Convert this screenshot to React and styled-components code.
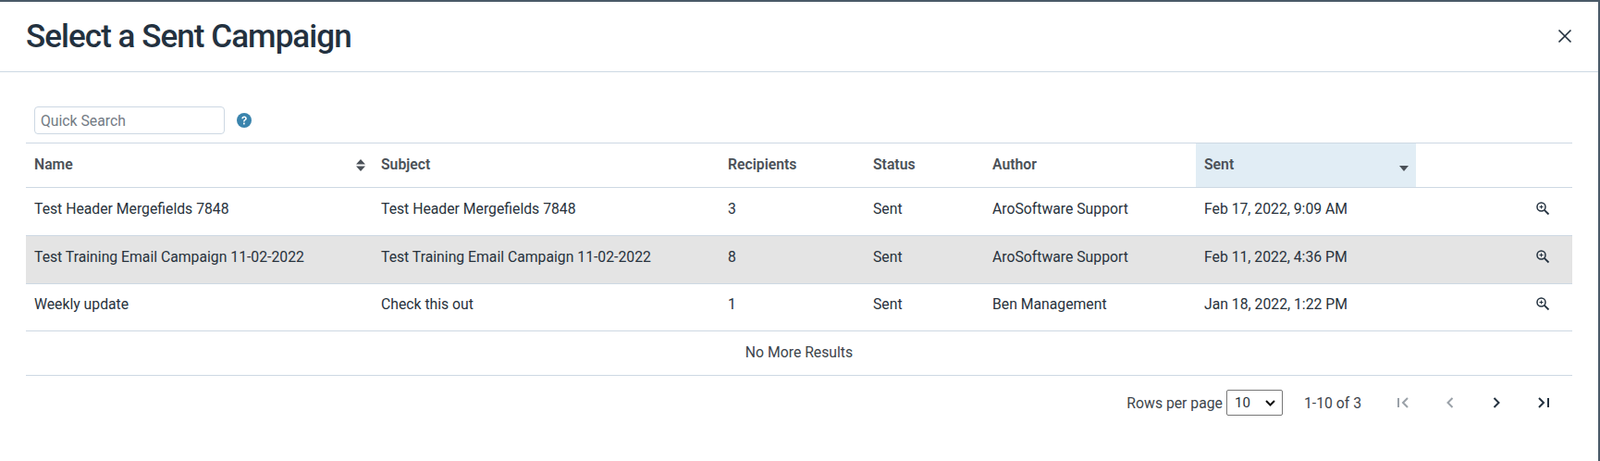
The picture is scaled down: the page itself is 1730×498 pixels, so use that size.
import React from 'react';
import styled, { createGlobalStyle } from 'styled-components';

const GlobalStyle = createGlobalStyle`
  html, body {
    margin: 0;
    padding: 0;
    background: #fff;
  }
  body {
    font-family: Roboto, "Liberation Sans", sans-serif;
    color: #28323c;
  }
`;

const Modal = styled.div`
  width: 1730px;
  height: 498px;
  box-sizing: border-box;
  background: #fff;
  border-top: 2px solid #4a5a68;
  border-right: 2px solid #4a5a68;
  overflow: hidden;
`;

const ModalHeader = styled.header`
  height: 76px;
  box-sizing: border-box;
  display: flex;
  align-items: center;
  justify-content: space-between;
  padding: 0 28px 1px 28px;
  border-bottom: 1px solid #cdd8e3;
`;

const Title = styled.h1`
  margin: 0;
  font-size: 35px;
  font-weight: 500;
  letter-spacing: -0.95px;
  color: #23313f;
`;

const CloseButton = styled.button`
  display: flex;
  border: 0;
  background: none;
  padding: 0;
  color: #23313f;
  cursor: pointer;
`;

const Body = styled.div`
  padding: 37px 28px 0 28px;
  width: 1672px;
`;

const SearchRow = styled.div`
  display: flex;
  align-items: center;
  gap: 13px;
  height: 30px;
  padding: 0 0 9px 9px;
`;

const SearchInput = styled.input`
  width: 206px;
  height: 30px;
  box-sizing: border-box;
  border: 1px solid #cdd8e3;
  border-radius: 4px;
  padding: 0 6px;
  font-family: inherit;
  font-size: 15.75px;
  color: #28323c;

  &::placeholder {
    color: #737b84;
    opacity: 1;
  }
`;

const Table = styled.table`
  width: 1672px;
  table-layout: fixed;
  border-collapse: collapse;
  border-top: 1px solid #cdd8e3;
  font-size: 15.75px;
`;

const HeadCell = styled.th`
  position: relative;
  height: 48px;
  padding: 0 9px 3px 9px;
  box-sizing: border-box;
  text-align: left;
  font-weight: 600;
  color: #4b5158;
  background: ${(props) => (props.$sorted ? '#e1edf5' : 'transparent')};
  border-bottom: 1px solid #cdd8e3;
`;

const SortIcon = styled.svg`
  position: absolute;
  right: ${(props) => props.$right}px;
  top: ${(props) => props.$top}px;
  fill: #4b5158;
`;

const Row = styled.tr`
  height: ${(props) => props.$height}px;
  background: ${(props) => (props.$highlighted ? '#e4e4e4' : 'transparent')};
  border-bottom: 1px solid #cdd8e3;
`;

const Cell = styled.td`
  padding: 0 9px 7px 9px;
  box-sizing: border-box;
  white-space: nowrap;
  color: #28323c;
`;

const ActionCell = styled(Cell)`
  text-align: right;
  padding-right: 24px;
`;

const ZoomIcon = styled.svg`
  display: inline-block;
  vertical-align: middle;
  margin-bottom: 2px;
  color: #23313f;
`;

const EmptyRow = styled.td`
  height: 48px;
  padding: 0 0 3px 0;
  box-sizing: border-box;
  text-align: center;
  color: #3d444b;
  border-bottom: 1px solid #cdd8e3;
`;

const Pagination = styled.div`
  display: flex;
  align-items: center;
  justify-content: flex-end;
  height: 58px;
  padding-right: 6px;
  font-size: 15.75px;
  color: #3d444b;
`;

const RowsSelect = styled.select`
  appearance: none;
  width: 61px;
  height: 28px;
  margin-left: 4px;
  padding: 0 0 0 8px;
  border: 1px solid #767676;
  border-radius: 2px;
  background: #fff url("data:image/svg+xml,%3Csvg xmlns='http://www.w3.org/2000/svg' width='11' height='7' viewBox='0 0 11 7'%3E%3Cpath d='M1 1l4.500 4.500L10 1' fill='none' stroke='%23111' stroke-width='2'/%3E%3C/svg%3E") no-repeat right 7px center;
  font-family: inherit;
  font-size: 15px;
  color: #28323c;
`;

const PageInfo = styled.span`
  margin-left: 23px;
  margin-right: 20px;
`;

const PageButton = styled.button`
  width: 50.5px;
  height: 32px;
  display: flex;
  align-items: center;
  justify-content: center;
  border: 0;
  padding: 0;
  background: none;
  color: ${(props) => (props.disabled ? '#9aa1a8' : '#23313f')};
`;

const columns = [
  { key: 'name', label: 'Name', width: 375 },
  { key: 'subject', label: 'Subject', width: 375 },
  { key: 'recipients', label: 'Recipients', width: 157 },
  { key: 'status', label: 'Status', width: 129 },
  { key: 'author', label: 'Author', width: 229 },
  { key: 'sent', label: 'Sent', width: 238 },
];

const campaigns = [
  { name: 'Test Header Mergefields 7848', subject: 'Test Header Mergefields 7848', recipients: 3, status: 'Sent', author: 'AroSoftware Support', sent: 'Feb 17, 2022, 9:09 AM', height: 52 },
  { name: 'Test Training Email Campaign 11-02-2022', subject: 'Test Training Email Campaign 11-02-2022', recipients: 8, status: 'Sent', author: 'AroSoftware Support', sent: 'Feb 11, 2022, 4:36 PM', height: 52, highlighted: true },
  { name: 'Weekly update', subject: 'Check this out', recipients: 1, status: 'Sent', author: 'Ben Management', sent: 'Jan 18, 2022, 1:22 PM', height: 51 },
];

const Zoom = () => (
  <ZoomIcon width="16" height="16" viewBox="0 0 16 16" fill="none" stroke="currentColor">
    <circle cx="6.5" cy="6.5" r="4.5" strokeWidth="1.5" />
    <path d="M9.8 9.8 14.5 14.5" strokeWidth="1.8" />
    <path d="M4.5 6.5h4M6.5 4.5v4" strokeWidth="1" />
  </ZoomIcon>
);

const PagerIcon = ({ d }) => (
  <svg width="16" height="16" viewBox="0 0 16 16" fill="none" stroke="currentColor" strokeWidth="2">
    <path d={d} />
  </svg>
);

const App = () => (
  <>
    <GlobalStyle />
    <Modal>
      <ModalHeader>
        <Title>Select a Sent Campaign</Title>
        <CloseButton aria-label="Close">
          <svg width="16" height="16" viewBox="0 0 16 16" fill="none" stroke="currentColor" strokeWidth="1.7">
            <path d="M1.500 1.500 14.500 14.500M14.500 1.500 1.500 14.500" />
          </svg>
        </CloseButton>
      </ModalHeader>
      <Body>
        <SearchRow>
          <SearchInput placeholder="Quick Search" />
          <svg width="16" height="16" viewBox="0 0 16 16">
            <circle cx="8" cy="8" r="8" fill="#3a84ad" />
            <path d="M5.3 6.2C5.4 4.6 6.5 3.6 8.1 3.6c1.6 0 2.7 1 2.7 2.3 0 1-.5 1.6-1.4 2.2-.6.4-.8.7-.8 1.4H7.1c0-1.2.3-1.7 1.1-2.3.6-.4.9-.7.9-1.2 0-.6-.4-1-1-1-.7 0-1.1.4-1.2 1.2H5.3Z" fill="#fff" />
            <rect x="7" y="10.6" width="1.7" height="1.8" fill="#fff" />
          </svg>
        </SearchRow>
        <Table>
          <colgroup>
            {columns.map((col) => <col key={col.key} width={col.width} />)}
            <col />
          </colgroup>
          <thead>
            <tr>
              {columns.map((col) => (
                <HeadCell key={col.key} $sorted={col.key === 'sent'}>
                  {col.label}
                  {col.key === 'name' && (
                    <SortIcon $right={8} $top={17} width="10" height="13" viewBox="0 0 10 13">
                      <path d="M5 0 10 5.500H0ZM5 13 0 7.500H10Z" />
                    </SortIcon>
                  )}
                  {col.key === 'sent' && (
                    <SortIcon $right={8} $top={24} width="10" height="6" viewBox="0 0 10 6">
                      <path d="M0 0H10L5 6Z" />
                    </SortIcon>
                  )}
                </HeadCell>
              ))}
              <HeadCell />
            </tr>
          </thead>
          <tbody>
            {campaigns.map((row) => (
              <Row key={row.name} $height={row.height} $highlighted={row.highlighted}>
                {columns.map((col) => <Cell key={col.key}>{row[col.key]}</Cell>)}
                <ActionCell><Zoom /></ActionCell>
              </Row>
            ))}
            <tr>
              <EmptyRow colSpan={7}>No More Results</EmptyRow>
            </tr>
          </tbody>
        </Table>
        <Pagination>
          <span>Rows per page</span>
          <RowsSelect defaultValue="10">
            <option>10</option>
            <option>25</option>
            <option>50</option>
          </RowsSelect>
          <PageInfo>1-10 of 3</PageInfo>
          <PageButton disabled aria-label="First page"><PagerIcon d="M3 3v10M13 3 8 8l5 5" /></PageButton>
          <PageButton disabled aria-label="Previous page"><PagerIcon d="M10.500 3 5.500 8l5 5" /></PageButton>
          <PageButton aria-label="Next page"><PagerIcon d="M5.500 3l5 5-5 5" /></PageButton>
          <PageButton aria-label="Last page"><PagerIcon d="M3 3l5 5-5 5M13 3v10" /></PageButton>
        </Pagination>
      </Body>
    </Modal>
  </>
);

export default App;
